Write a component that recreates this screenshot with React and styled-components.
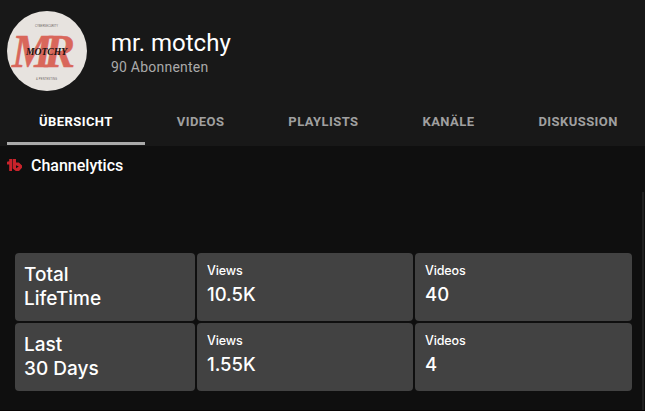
import React from "react";
import styled, { createGlobalStyle } from "styled-components";

const GlobalStyle = createGlobalStyle`
  * { box-sizing: border-box; }
  body { margin: 0; background: #0f0f0f; overflow: hidden; }
`;

const Page = styled.div`
  width: 645px;
  height: 411px;
  display: flex;
  flex-direction: column;
  background: #0f0f0f;
  color: #fff;
  font-family: Roboto, sans-serif;
  border-bottom: 1px solid #080405;
`;

const Header = styled.header`
  height: 146px;
  flex: none;
  padding: 11px 0 0 7px;
  background: #181818;
`;

const Profile = styled.div`
  display: flex;
  height: 86px;
`;

const Avatar = styled.svg`
  width: 80px;
  height: 80px;
  border-radius: 50%;
  margin-right: 24px;
`;

const ChannelName = styled.h1`
  margin: 17px 0 0;
  font-size: 24px;
  line-height: 30px;
  font-weight: 400;
`;

const Subscribers = styled.div`
  font-size: 14px;
  line-height: 18px;
  letter-spacing: 0.22px;
  color: #aaa;
`;

const Tabs = styled.nav`
  display: flex;
  height: 48px;
`;

const Tab = styled.div`
  flex: none;
  height: 48px;
  padding: 0 32px;
  line-height: 49px;
  font-size: 13px;
  font-weight: 700;
  letter-spacing: 0.43px;
  color: ${(p) => (p.$active ? "#fff" : "#a0a0a0")};
  border-bottom: 3px solid ${(p) => (p.$active ? "#aaa" : "transparent")};
`;

const SectionTitle = styled.h2`
  display: flex;
  align-items: center;
  height: 38px;
  margin: 0;
  padding-left: 7px;
  gap: 9px;
  font-size: 16px;
  font-weight: 500;
`;

const Content = styled.main`
  display: flex;
  justify-content: space-between;
  flex: 1;
  padding: 8px 1px 0 15px;
`;

const Stats = styled.section`
  display: grid;
  grid-template-columns: 180px 216px 217px;
  grid-template-rows: 68px 68px;
  gap: 2px;
  margin-top: 61px;
`;

const Card = styled.div`
  padding: ${(p) => (p.$label ? "10px" : "10px 9px")};
  border-radius: 4px;
  background: #424242;
  font-family: Inter, sans-serif;
`;

const Period = styled.div`
  font-size: 19px;
  line-height: 24px;
  font-weight: 500;
  white-space: pre-line;
`;

const Metric = styled.div`
  font-size: 12.5px;
  line-height: 16px;
  font-weight: 500;
  letter-spacing: -0.15px;
`;

const Value = styled.div`
  margin-top: 3px;
  font-size: 18.5px;
  line-height: 24px;
  font-weight: 500;
`;

const Divider = styled.div`
  width: 2px;
  background: #202020;
`;

const tabs = ["ÜBERSICHT", "VIDEOS", "PLAYLISTS", "KANÄLE", "DISKUSSION"];
const rows = [
  { period: "Total\nLifeTime", views: "10.5K", videos: "40" },
  { period: "Last\n30 Days", views: "1.55K", videos: "4" },
];

function ChannelAvatar() {
  return (
    <Avatar viewBox="0 0 80 80">
      <rect width="80" height="80" fill="#e7e3df" />
      <g fontFamily="Liberation Serif, serif" fontStyle="italic" fontWeight="700">
        <g fontSize="46" fill="#d9675b" stroke="#d9675b" strokeWidth="0.5">
          <text x="5" y="55.5" textLength="40" lengthAdjust="spacingAndGlyphs">M</text>
          <text x="37" y="55.5" textLength="31" lengthAdjust="spacingAndGlyphs">R</text>
        </g>
        <text x="19" y="44" fontSize="10.5" fill="#18110f" textLength="41" lengthAdjust="spacingAndGlyphs">MOTCHY</text>
      </g>
      <g fontFamily="Liberation Sans, sans-serif" fontSize="2.6" fill="#5f5856">
        <text x="28" y="15.5" textLength="23">CYBERSECURITY</text>
        <text x="29" y="68.5" textLength="21">&amp; PENTESTING</text>
      </g>
    </Avatar>
  );
}

function BrandIcon() {
  return (
    <svg width="15" height="14" viewBox="0 0 15 14">
      <path d="M2.2 1H5v12H2.2V6.5H0V3.8l2.2-.6z" fill="#c9232b" />
      <path d="M5.6 1H9v3.6h2.8L15 7.4v2.4L12 13H8.8L5.6 10.4z" fill="#c9232b" />
      <path d="M9 7.2l2.8 1.4L9 10.2z" fill="#0f0f0f" />
    </svg>
  );
}

export default function App() {
  return (
    <Page>
      <GlobalStyle />
      <Header>
        <Profile>
          <ChannelAvatar />
          <div>
            <ChannelName>mr. motchy</ChannelName>
            <Subscribers>90 Abonnenten</Subscribers>
          </div>
        </Profile>
        <Tabs>
          {tabs.map((t, i) => (
            <Tab key={t} $active={i === 0}>{t}</Tab>
          ))}
        </Tabs>
      </Header>
      <SectionTitle>
        <BrandIcon />
        Channelytics
      </SectionTitle>
      <Content>
        <Stats>
          {rows.map((r) => (
            <React.Fragment key={r.period}>
              <Card><Period>{r.period}</Period></Card>
              <Card $label><Metric>Views</Metric><Value>{r.views}</Value></Card>
              <Card $label><Metric>Videos</Metric><Value>{r.videos}</Value></Card>
            </React.Fragment>
          ))}
        </Stats>
        <Divider />
      </Content>
    </Page>
  );
}
